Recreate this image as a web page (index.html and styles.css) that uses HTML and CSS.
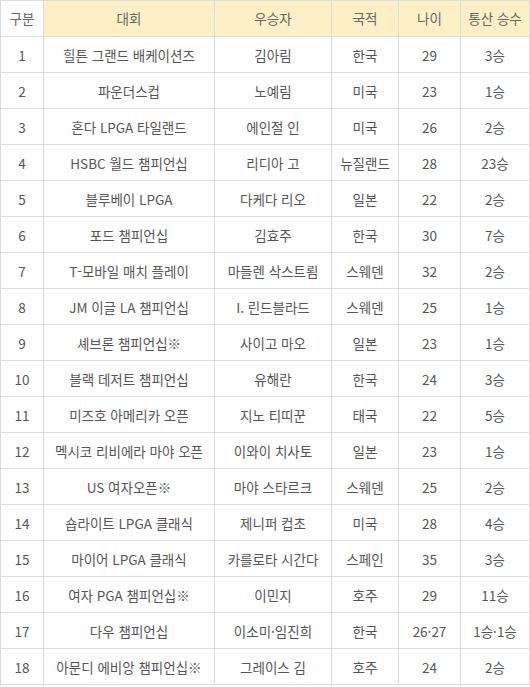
FILE: index.html
```html
<!DOCTYPE html>
<html lang="ko">
<head>
<meta charset="utf-8">
<link rel="stylesheet" href="styles.css">
</head>
<body>
<table class="wins">
  <colgroup>
    <col class="c-no"><col class="c-event"><col class="c-winner"><col class="c-nation"><col class="c-age"><col class="c-total">
  </colgroup>
  <thead>
    <tr><th class="plain">구분</th><th>대회</th><th>우승자</th><th>국적</th><th>나이</th><th>통산 승수</th></tr>
  </thead>
  <tbody>
    <tr><td>1</td><td>힐튼 그랜드 배케이션즈</td><td>김아림</td><td>한국</td><td>29</td><td>3승</td></tr>
    <tr><td>2</td><td>파운더스컵</td><td>노예림</td><td>미국</td><td>23</td><td>1승</td></tr>
    <tr><td>3</td><td>혼다 LPGA 타일랜드</td><td>에인절 인</td><td>미국</td><td>26</td><td>2승</td></tr>
    <tr><td>4</td><td>HSBC 월드 챔피언십</td><td>리디아 고</td><td>뉴질랜드</td><td>28</td><td>23승</td></tr>
    <tr><td>5</td><td>블루베이 LPGA</td><td>다케다 리오</td><td>일본</td><td>22</td><td>2승</td></tr>
    <tr><td>6</td><td>포드 챔피언십</td><td>김효주</td><td>한국</td><td>30</td><td>7승</td></tr>
    <tr><td>7</td><td>T-모바일 매치 플레이</td><td>마들렌 삭스트룀</td><td>스웨덴</td><td>32</td><td>2승</td></tr>
    <tr><td>8</td><td>JM 이글 LA 챔피언십</td><td>I. 린드블라드</td><td>스웨덴</td><td>25</td><td>1승</td></tr>
    <tr><td>9</td><td>셰브론 챔피언십※</td><td>사이고 마오</td><td>일본</td><td>23</td><td>1승</td></tr>
    <tr><td>10</td><td>블랙 데저트 챔피언십</td><td>유해란</td><td>한국</td><td>24</td><td>3승</td></tr>
    <tr><td>11</td><td>미즈호 아메리카 오픈</td><td>지노 티띠꾼</td><td>태국</td><td>22</td><td>5승</td></tr>
    <tr><td>12</td><td>멕시코 리비에라 마야 오픈</td><td>이와이 치사토</td><td>일본</td><td>23</td><td>1승</td></tr>
    <tr><td>13</td><td>US 여자오픈※</td><td>마야 스타르크</td><td>스웨덴</td><td>25</td><td>2승</td></tr>
    <tr><td>14</td><td>숍라이트 LPGA 클래식</td><td>제니퍼 컵초</td><td>미국</td><td>28</td><td>4승</td></tr>
    <tr><td>15</td><td>마이어 LPGA 클래식</td><td>카를로타 시간다</td><td>스페인</td><td>35</td><td>3승</td></tr>
    <tr><td>16</td><td>여자 PGA 챔피언십※</td><td>이민지</td><td>호주</td><td>29</td><td>11승</td></tr>
    <tr><td>17</td><td>다우 챔피언십</td><td>이소미·임진희</td><td>한국</td><td>26·27</td><td>1승·1승</td></tr>
    <tr><td>18</td><td>아문디 에비앙 챔피언십※</td><td>그레이스 김</td><td>호주</td><td>24</td><td>2승</td></tr>
  </tbody>
</table>
</body>
</html>
```
FILE: styles.css
```css
html, body {
  margin: 0;
  padding: 0;
  background: #ffffff;
}
.wins {
  border-collapse: collapse;
  table-layout: fixed;
  width: 529px;
  font-family: "Noto Sans CJK KR", "Noto Sans", sans-serif;
  font-size: 13.5px;
  color: #555555;
}
.c-no { width: 43px; }
.c-event { width: 171px; }
.c-winner { width: 117px; }
.c-nation { width: 67px; }
.c-age { width: 62px; }
.c-total { width: 69px; }
.wins th, .wins td {
  border: 1px solid #dcdcdc;
  height: 35px;
  padding: 0;
  text-align: center;
  vertical-align: middle;
  font-weight: normal;
  white-space: nowrap;
  line-height: 1;
}
.wins th {
  background: #fdefc6;
  color: #666666;
}
.wins th.plain {
  background: #ffffff;
}
.wins td {
  padding-top: 2px;
  height: 33px;
}
```
